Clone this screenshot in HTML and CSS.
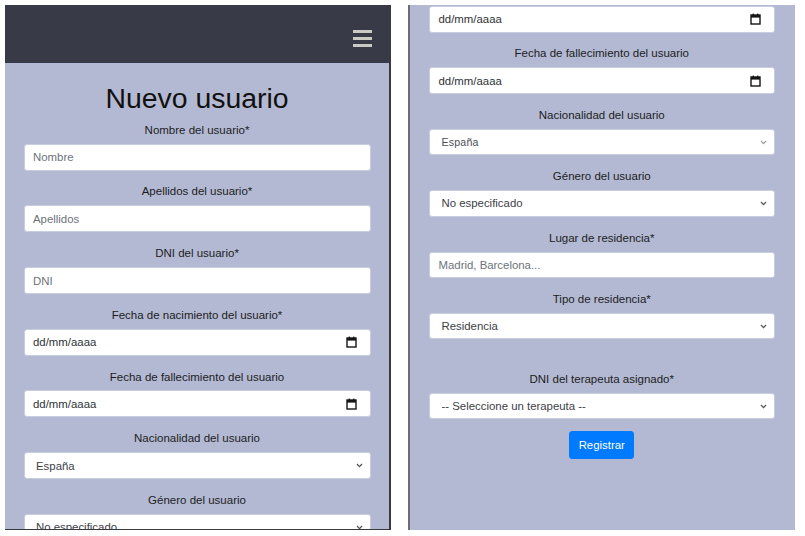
FILE: index.html
```html
<!DOCTYPE html>
<html lang="es">
<head>
<meta charset="utf-8">
<title>Nuevo usuario</title>
<link rel="stylesheet" href="styles.css">
</head>
<body>
<div class="screens">
  <section class="phone phone-left">
    <header class="topbar">
      <button class="toggler" aria-label="Menú"><span></span><span></span><span></span></button>
    </header>
    <form class="form form-left">
      <h1 class="title">Nuevo usuario</h1>
      <div class="group">
        <label class="label">Nombre del usuario*</label>
        <div class="field"><span class="ph">Nombre</span></div>
      </div>
      <div class="group">
        <label class="label">Apellidos del usuario*</label>
        <div class="field"><span class="ph">Apellidos</span></div>
      </div>
      <div class="group">
        <label class="label">DNI del usuario*</label>
        <div class="field"><span class="ph">DNI</span></div>
      </div>
      <div class="group">
        <label class="label">Fecha de nacimiento del usuario*</label>
        <div class="field field-date"><span class="val">dd/mm/aaaa</span>
          <svg class="cal" width="11" height="12" viewBox="0 0 11 12"><rect x="1" y="2" width="9" height="9" fill="none" stroke="#151515" stroke-width="1.4"/><rect x="1" y="2" width="9" height="2.6" fill="#151515"/><rect x="2.6" y="0.6" width="1.4" height="2" fill="#151515"/><rect x="7" y="0.6" width="1.4" height="2" fill="#151515"/></svg>
        </div>
      </div>
      <div class="group">
        <label class="label">Fecha de fallecimiento del usuario</label>
        <div class="field field-date"><span class="val">dd/mm/aaaa</span>
          <svg class="cal" width="11" height="12" viewBox="0 0 11 12"><rect x="1" y="2" width="9" height="9" fill="none" stroke="#151515" stroke-width="1.4"/><rect x="1" y="2" width="9" height="2.6" fill="#151515"/><rect x="2.6" y="0.6" width="1.4" height="2" fill="#151515"/><rect x="7" y="0.6" width="1.4" height="2" fill="#151515"/></svg>
        </div>
      </div>
      <div class="group">
        <label class="label">Nacionalidad del usuario</label>
        <div class="field field-select"><span class="val">España</span>
          <svg class="chev" width="7" height="5" viewBox="0 0 7 5"><polyline points="1,1 3.5,3.6 6,1" fill="none" stroke="#555" stroke-width="1.3"/></svg>
        </div>
      </div>
      <div class="group">
        <label class="label">Género del usuario</label>
        <div class="field field-select"><span class="val">No especificado</span>
          <svg class="chev" width="7" height="5" viewBox="0 0 7 5"><polyline points="1,1 3.5,3.6 6,1" fill="none" stroke="#555" stroke-width="1.3"/></svg>
        </div>
      </div>
    </form>
  </section>

  <section class="phone phone-right">
    <form class="form form-right">
      <div class="group">
        <div class="field field-date"><span class="val">dd/mm/aaaa</span>
          <svg class="cal" width="11" height="12" viewBox="0 0 11 12"><rect x="1" y="2" width="9" height="9" fill="none" stroke="#151515" stroke-width="1.4"/><rect x="1" y="2" width="9" height="2.6" fill="#151515"/><rect x="2.6" y="0.6" width="1.4" height="2" fill="#151515"/><rect x="7" y="0.6" width="1.4" height="2" fill="#151515"/></svg>
        </div>
      </div>
      <div class="group">
        <label class="label">Fecha de fallecimiento del usuario</label>
        <div class="field field-date"><span class="val">dd/mm/aaaa</span>
          <svg class="cal" width="11" height="12" viewBox="0 0 11 12"><rect x="1" y="2" width="9" height="9" fill="none" stroke="#151515" stroke-width="1.4"/><rect x="1" y="2" width="9" height="2.6" fill="#151515"/><rect x="2.6" y="0.6" width="1.4" height="2" fill="#151515"/><rect x="7" y="0.6" width="1.4" height="2" fill="#151515"/></svg>
        </div>
      </div>
      <div class="group">
        <label class="label">Nacionalidad del usuario</label>
        <div class="field field-select field-faint"><span class="val">España</span>
          <svg class="chev" width="7" height="5" viewBox="0 0 7 5"><polyline points="1,1 3.5,3.6 6,1" fill="none" stroke="#999" stroke-width="1.1"/></svg>
        </div>
      </div>
      <div class="group">
        <label class="label">Género del usuario</label>
        <div class="field field-select"><span class="val">No especificado</span>
          <svg class="chev" width="7" height="5" viewBox="0 0 7 5"><polyline points="1,1 3.5,3.6 6,1" fill="none" stroke="#555" stroke-width="1.3"/></svg>
        </div>
      </div>
      <div class="group">
        <label class="label">Lugar de residencia*</label>
        <div class="field"><span class="ph">Madrid, Barcelona...</span></div>
      </div>
      <div class="group">
        <label class="label">Tipo de residencia*</label>
        <div class="field field-select"><span class="val">Residencia</span>
          <svg class="chev" width="7" height="5" viewBox="0 0 7 5"><polyline points="1,1 3.5,3.6 6,1" fill="none" stroke="#555" stroke-width="1.3"/></svg>
        </div>
      </div>
      <div class="spacer"></div>
      <div class="group">
        <label class="label">DNI del terapeuta asignado*</label>
        <div class="field field-select"><span class="val">-- Seleccione un terapeuta --</span>
          <svg class="chev" width="7" height="5" viewBox="0 0 7 5"><polyline points="1,1 3.5,3.6 6,1" fill="none" stroke="#555" stroke-width="1.3"/></svg>
        </div>
      </div>
      <div class="actions">
        <button type="button" class="btn">Registrar</button>
      </div>
    </form>
  </section>
</div>
</body>
</html>
```

FILE: styles.css
```css
* { box-sizing: border-box; }

body {
  margin: 0;
  background: #ffffff;
  font-family: "Liberation Sans", Arial, sans-serif;
  color: #212529;
}

.screens {
  display: flex;
  align-items: flex-start;
  gap: 17px;
  padding: 5px 0 0 5px;
}

.phone {
  background: #b4b9d3;
  overflow: hidden;
}

.phone-left {
  width: 386px;
  height: 525px;
  border-right: 2px solid #3a3a3c;
  border-bottom: 1px solid #3a3a3c;
}

.phone-right {
  width: 387px;
  height: 525px;
  border-left: 2px solid #6e6e72;
}

.topbar {
  height: 58px;
  background: #383b47;
  display: flex;
  justify-content: flex-end;
  align-items: flex-start;
  padding: 25px 17px 0 0;
}

.toggler {
  display: flex;
  flex-direction: column;
  gap: 4px;
  padding: 0;
  border: 0;
  background: transparent;
}

.toggler span {
  display: block;
  width: 19px;
  height: 3px;
  background: #c9cac2;
}

.form {
  display: flex;
  flex-direction: column;
}

.form-left {
  padding: 18px 18.5px 0;
}

.form-right {
  padding: 1px 20.5px 0 19px;
}

.title {
  margin: 0 0 5.5px;
  font-size: 28.4px;
  line-height: 34.3px;
  font-weight: normal;
  text-align: center;
  color: #111;
}

.group {
  display: flex;
  flex-direction: column;
  margin-bottom: 11.8px;
}

.form-right .group {
  margin-bottom: 11.9px;
}

.label {
  display: block;
  text-align: center;
  font-size: 11.5px;
  line-height: 18.6px;
  margin-bottom: 4.3px;
  color: #1b1d22;
}

.field {
  height: 27px;
  background: #fff;
  border: 1px solid #c9cde0;
  border-radius: 3px;
  display: flex;
  align-items: center;
  padding: 0 8.5px;
  font-size: 11.4px;
  color: #3b3f45;
}

.form-right .field {
  height: 26.6px;
}

.ph {
  color: #6c737b;
}

.field-date {
  justify-content: space-between;
  padding-right: 13px;
}

.field-date .val {
  color: #2e3136;
}

.field-select {
  justify-content: space-between;
  padding: 0 7px 0 11.5px;
}

.field-select .val {
  color: #3d4147;
}

.field-faint .val {
  font-size: 10.6px;
  color: #4a4e55;
  letter-spacing: 0.2px;
}

.cal {
  flex: none;
}

.chev {
  flex: none;
}

.spacer {
  height: 18.6px;
}

.actions {
  display: flex;
  justify-content: center;
}

.btn {
  font-family: "Liberation Sans", Arial, sans-serif;
  font-size: 11.4px;
  line-height: 17.1px;
  padding: 4.3px 8.6px;
  color: #fff;
  background: #007bff;
  border: 1px solid #007bff;
  border-radius: 3px;
}
```
